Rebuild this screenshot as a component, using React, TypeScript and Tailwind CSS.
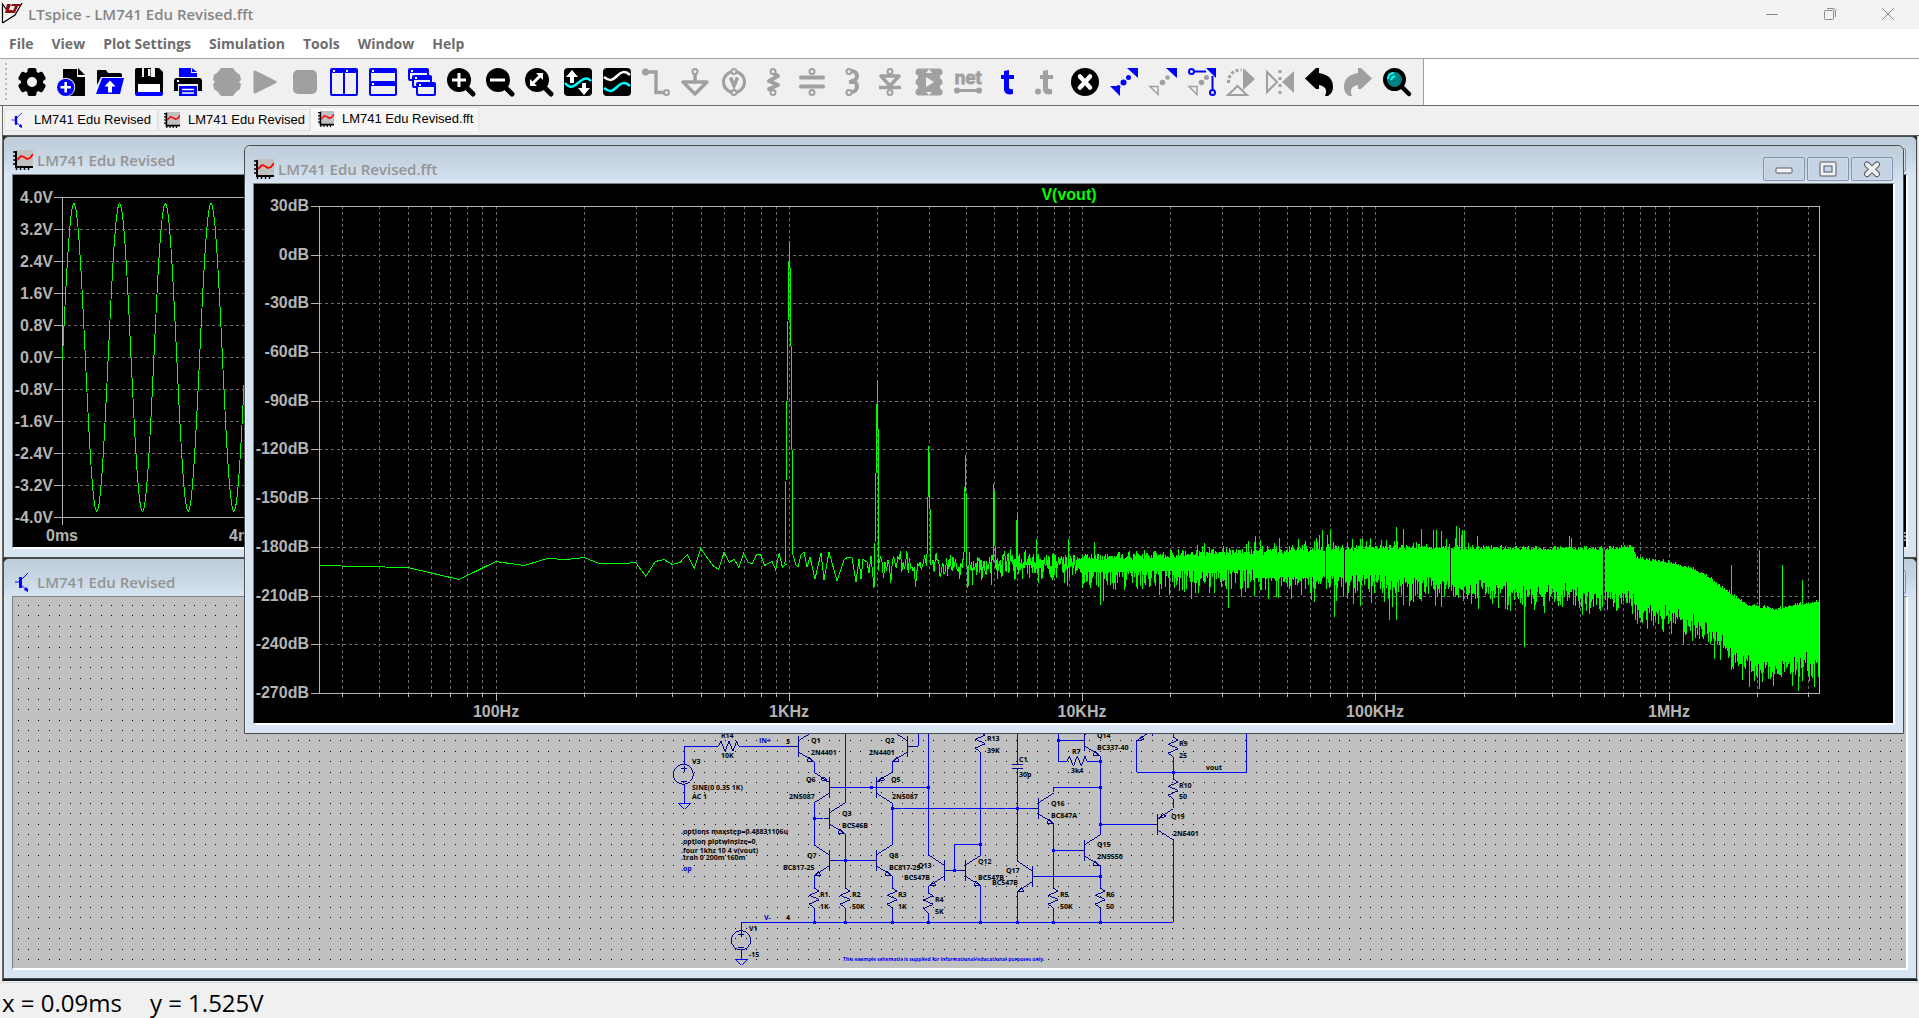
import type { ReactNode } from "react";

const GRAY = "#a0a0a0";
const BLUE = "#0000ff";
const BG = "#f0f0f0";

/* ---------- toolbar icons, all on a 28x28 grid ---------- */

const gearTeeth = (w: number) => [0, 60, 120].map((a) => (
	<rect key={a} x={14 - w / 2} y="0" width={w} height="28" rx="2" transform={`rotate(${a} 14 14)`} />
));

const pane = (x: number, y: number, w: number, h: number) => (
	<g key={`${x}-${y}`}>
		<rect x={x + 1} y={y + 1} width={w - 2} height={h - 2} rx="1" fill={BG} stroke={BLUE} strokeWidth="2" />
		<path d={`M${x + 1} ${y + 3}h${w - 2}`} stroke={BLUE} strokeWidth="4" />
		<path d={`M${x + 3} ${y + 3}h2`} stroke="#fff" strokeWidth="2" />
	</g>
);

const lens = (
	<>
		<circle cx="12" cy="12" r="12" />
		<path d="M19 19l7 7" stroke="#000" strokeWidth="5" strokeLinecap="round" />
	</>
);

const ring = (cx: number, cy: number, color = GRAY) => (
	<circle cx={cx} cy={cy} r="2.5" fill={BG} stroke={color} strokeWidth="2" />
);

const tGlyph = "M11 3l5-1v5h5v4h-5v8q0 3 4 2v5q-9 2-9-5V11H8V7h3z";

type Tool = { name: string; off?: boolean; icon: ReactNode };

const tools: Tool[] = [
	{
		name: "Settings",
		icon: (
			<>
				<circle cx="14" cy="14" r="11" />
				{gearTeeth(9)}
				<circle cx="14" cy="14" r="5" fill={BG} />
			</>
		),
	},
	{
		name: "New Schematic",
		icon: (
			<>
				<path d="M6 1h14v8h8v19H6z" />
				<path d="M21 0l7 7h-7z" />
				<circle cx="8.7" cy="19.3" r="9.5" fill={BG} />
				<circle cx="8.7" cy="19.3" r="8.6" fill={BLUE} />
				<path d="M3.5 19.3h10.4M8.7 14v10.6" stroke="#fff" strokeWidth="2.6" />
			</>
		),
	},
	{
		name: "Open",
		icon: (
			<>
				<path d="M1 3q0-1 1-1h8l2 3h12q2 0 2 2v2H5L1 17z" />
				<path d="M6 10h22l-4 16H0z" fill={BLUE} />
				<path d="M14 12.5l5.5 6H16v6h-4v-6H8.500z" fill="#fff" />
			</>
		),
	},
	{
		name: "Save",
		icon: (
			<>
				<path d="M2 0h22l4 4v20H0V2q0-2 2-2z" />
				<path d="M7 0h13v9H7z" fill={BG} />
				<path d="M9 0h7v9H9z" />
				<path d="M13 1h2.500v7H13z" fill={BG} />
				<path d="M3 16h22v8H3z" fill="#fff" />
				<path d="M0 24h28v2q0 2-2 2H2q-2 0-2-2z" fill={BLUE} />
			</>
		),
	},
	{
		name: "Print",
		icon: (
			<>
				<path d="M5 0h12v5h6v4H5z" fill={BLUE} />
				<path d="M18 0l5 4h-5z" fill={BLUE} />
				<path d="M3 10h22q3 0 3 3v10H0V13q0-3 3-3z" />
				<path d="M3 13h2" stroke="#fff" strokeWidth="2" />
				<path d="M4 16h20v12H4z" fill={BG} />
				<path d="M5 18h18v10H5z" fill={BLUE} />
				<path d="M8 21.500h12M8 25h12" stroke="#fff" strokeWidth="1.500" />
			</>
		),
	},
	{
		name: "Configure Analysis",
		off: true,
		icon: <path d="M8 0h12l3 4 4 3 1 5-2 2 2 2-1 5-4 3-3 4H8l-3-4-4-3-1-5 2-2-2-2 1-5 4-3z" fill={GRAY} />,
	},
	{ name: "Run", off: true, icon: <path d="M3 4l20 10L3 24z" fill={GRAY} stroke={GRAY} strokeWidth="3" strokeLinejoin="round" /> },
	{ name: "Stop", off: true, icon: <rect x="2" y="2" width="24" height="24" rx="5" fill={GRAY} /> },
	{ name: "Tile Vertically", icon: <>{[pane(0, 0, 15, 28), pane(13, 0, 15, 28)]}</> },
	{ name: "Tile Horizontally", icon: <>{[pane(0, 0, 28, 15), pane(0, 13, 28, 15)]}</> },
	{ name: "Cascade", icon: <>{[pane(0, 0, 21, 13), pane(4, 7, 20, 13), pane(8, 14, 20, 14)]}</> },
	{
		name: "Zoom In",
		icon: (
			<>
				{lens}
				<path d="M5 12h14M12 5v14" stroke="#fff" strokeWidth="3" />
			</>
		),
	},
	{
		name: "Zoom Out",
		icon: (
			<>
				{lens}
				<path d="M4 12h15" stroke="#fff" strokeWidth="3" />
			</>
		),
	},
	{
		name: "Zoom to Fit",
		icon: (
			<>
				{lens}
				<path d="M11 5h7v7zM5 11v7h7z" fill="#fff" />
				<path d="M8 15l7-7" stroke="#fff" strokeWidth="3" />
			</>
		),
	},
	{
		name: "Autorange",
		icon: (
			<>
				<rect width="28" height="28" rx="4" />
				<path d="M1 15c5 6 8 4 13 0s9-7 13-2" fill="none" stroke="#00ffff" strokeWidth="2.500" />
				<path d="M8 2l6 7h-4v6H6V9H2zM20 27l-6-7h4v-5h4v5h4z" fill="#fff" />
			</>
		),
	},
	{
		name: "Plot",
		icon: (
			<>
				<rect width="28" height="28" rx="4" />
				<path d="M1 9c6 5 9 3 13-1s8-6 13-1" fill="none" stroke="#fff" strokeWidth="2.500" />
				<path d="M1 20c6 5 9 3 13-1s8-6 13-1" fill="none" stroke="#00ffff" strokeWidth="2.500" />
			</>
		),
	},
	{
		name: "Wire",
		off: true,
		icon: (
			<>
				<circle cx="3.500" cy="4" r="3.500" fill={GRAY} />
				<path d="M4 4h10v20.500h9" fill="none" stroke={GRAY} strokeWidth="3.500" />
				{ring(24.5, 24.5)}
			</>
		),
	},
	{
		name: "Ground",
		off: true,
		icon: (
			<>
				<path d="M14 6v8M2 14h24L14 26z" fill="none" stroke={GRAY} strokeWidth="3.500" strokeLinejoin="round" />
				{ring(14, 3.5)}
			</>
		),
	},
	{
		name: "Voltage Source",
		off: true,
		icon: (
			<>
				<circle cx="14" cy="14" r="10.500" fill="none" stroke={GRAY} strokeWidth="3" />
				<path d="M10.500 9.500L14 18l3.500-8.500" fill="none" stroke={GRAY} strokeWidth="3.500" />
				{ring(14, 3.5)}
				{ring(14, 24.5)}
			</>
		),
	},
	{
		name: "Resistor",
		off: true,
		icon: (
			<>
				<path d="M14 5l5 3-9 5 9 4-9 4 5 3" fill="none" stroke={GRAY} strokeWidth="4" strokeLinejoin="round" />
				{ring(14, 3.5)}
				{ring(14, 24.5)}
			</>
		),
	},
	{
		name: "Capacitor",
		off: true,
		icon: (
			<>
				<path d="M3 9.500h22M3 18.500h22" stroke={GRAY} strokeWidth="4" strokeLinecap="round" />
				{ring(14, 3.5)}
				{ring(14, 24.5)}
			</>
		),
	},
	{
		name: "Inductor",
		off: true,
		icon: (
			<>
				<path d="M14 3c8 0 8 10 0 10 8 0 8 11 0 11" fill="none" stroke={GRAY} strokeWidth="4" />
				<path d="M12 14h6" stroke={GRAY} strokeWidth="4" />
				{ring(12, 3.5)}
				{ring(12, 24.5)}
			</>
		),
	},
	{
		name: "Diode",
		off: true,
		icon: (
			<>
				<path d="M5 8h18l-9 10z" fill="none" stroke={GRAY} strokeWidth="3.500" strokeLinejoin="round" />
				<path d="M3 19.500h22" stroke={GRAY} strokeWidth="3.500" />
				{ring(14, 3.5)}
				{ring(14, 24.5)}
			</>
		),
	},
	{
		name: "Component",
		off: true,
		icon: (
			<>
				<path d="M3 3h22v22H3z" fill={GRAY} />
				<path d="M4 4h20M4 14h20M4 24h20" stroke={GRAY} strokeWidth="7" strokeLinecap="round" />
				<path d="M11 9l8 5-8 5zM14 1l3 4h-6zM14 27l3-3h-6z" fill={BG} />
			</>
		),
	},
	{
		name: "Net Name",
		off: true,
		icon: (
			<>
				<text
					x="14"
					y="16"
					textAnchor="middle"
					className="font-['Liberation_Sans',sans-serif] text-[18px] font-bold"
					fill={GRAY}
					stroke={GRAY}
				>
					net
				</text>
				<path d="M4 22.500h20" stroke={GRAY} strokeWidth="3" />
				<circle cx="3" cy="22.500" r="3" fill={GRAY} />
				<circle cx="25" cy="22.500" r="3" fill={GRAY} />
			</>
		),
	},
	{
		name: "Text",
		icon: <path d={tGlyph} fill={BLUE} />,
	},
	{
		name: "SPICE Directive",
		off: true,
		icon: (
			<>
				<path d={tGlyph} fill={GRAY} />
				<circle cx="6" cy="23.500" r="3" fill={GRAY} />
			</>
		),
	},
	{
		name: "Delete",
		icon: (
			<>
				<circle cx="14" cy="14" r="14" />
				<path d="M9 8.500l10 11M19 8.500l-10 11" stroke="#fff" strokeWidth="4.500" strokeLinecap="round" />
			</>
		),
	},
	{
		name: "Move",
		icon: (
			<g fill={BLUE}>
				<path d="M17 0h11v10zM0 18h10v10z" />
				<circle cx="13.500" cy="14.500" r="3" />
				<circle cx="18.500" cy="9.500" r="2.500" />
				<circle cx="8.500" cy="19" r="2" />
			</g>
		),
	},
	{
		name: "Duplicate",
		off: true,
		icon: (
			<>
				<path d="M17 0h11v10z" fill={BLUE} />
				<path d="M1 18.500h8v8z" fill="none" stroke={GRAY} strokeWidth="1.500" />
				<g fill={GRAY}>
					<circle cx="13.500" cy="14.500" r="2.800" />
					<circle cx="18.500" cy="9.500" r="2.300" />
				</g>
			</>
		),
	},
	{
		name: "Drag",
		icon: (
			<>
				<path d="M18 0h10v10z" fill={BLUE} />
				<path d="M1 18.500h8v8z" fill="none" stroke={GRAY} strokeWidth="1.500" />
				<circle cx="13.500" cy="14.500" r="2.800" fill={GRAY} />
				<circle cx="18.500" cy="9.500" r="2.500" fill={GRAY} />
				<path d="M4 3.500h14M24.500 8v16" stroke={BLUE} strokeWidth="2" />
				{ring(3.5, 3.5, BLUE)}
				{ring(24.5, 24.5, BLUE)}
			</>
		),
	},
	{
		name: "Rotate",
		off: true,
		icon: (
			<>
				<path d="M16 0l12 11-12 11z" fill={GRAY} />
				<path d="M1.500 15c0-8 4-13 13-13" fill="none" stroke={GRAY} strokeWidth="3" strokeDasharray="3 2" />
				<path d="M1 27l9.500-9 9.500 9z" fill={BG} stroke={GRAY} strokeWidth="2" />
			</>
		),
	},
	{
		name: "Mirror",
		off: true,
		icon: (
			<>
				<path d="M1 4l10 10L1 24z" fill="none" stroke={GRAY} strokeWidth="2" />
				<path d="M28 3v22L16 14z" fill={GRAY} />
				<path d="M14 2v25" stroke={GRAY} strokeWidth="3" strokeDasharray="3 4" />
			</>
		),
	},
	{ name: "Undo", icon: <path d="M0 10.500L11 0h3v5q14 2 14 14 0 6-5 9h-3q4-9-6-11v4h-3z" /> },
	{ name: "Redo", off: true, icon: <path d="M28 10.500L17 0h-3v5Q0 7 0 19q0 6 5 9h3q-4-9 6-11v4h3z" fill={GRAY} /> },
	{
		name: "Search",
		icon: (
			<>
				<circle cx="11.500" cy="11.500" r="9.500" fill="#008080" stroke="#000" strokeWidth="4" />
				<path d="M5 11q0-6 6-6M8 12q1-3 4-4" fill="none" stroke="#00ffff" strokeWidth="2" />
				<path d="M20 20l6 6" stroke="#000" strokeWidth="4.500" strokeLinecap="round" />
			</>
		),
	},
];

/* ---------- small document icons ---------- */

function PlotIcon({ className }: { className: string }) {
	return (
		<svg viewBox="0 0 20 20" className={className} aria-hidden="true">
			<path d="M3 0h17v17H3z" fill="#c0c0c0" />
			<path d="M3 1v17M2 17h18" stroke="#000" strokeWidth="2" />
			<path d="M0 2h3M0 6h3M0 10h3M0 14h3M3.500 17v3M7.500 17v3M11.500 17v3M15.500 17v3" stroke="#000" strokeWidth="1.500" />
			<path d="M4 10l4-4 3 1 3 2 3-1 3-4" fill="none" stroke="#f00" strokeWidth="1.800" />
		</svg>
	);
}

function SchematicIcon({ className }: { className: string }) {
	return (
		<svg viewBox="0 0 20 20" className={className} aria-hidden="true">
			<path d="M2 10h5" stroke={BLUE} />
			<path d="M7.500 5v11" stroke={BLUE} strokeWidth="3" />
			<path d="M8 8l7-7M8 13l7 6" stroke={BLUE} />
			<path d="M15 20v-3l-2-2-2 3z" fill={BLUE} />
		</svg>
	);
}

/* ---------- signal data ---------- */

function mulberry32(seed: number) {
	let a = seed;
	return () => {
		a = (a + 0x6d2b79f5) | 0;
		let t = Math.imul(a ^ (a >>> 15), 1 | a);
		t = (t + Math.imul(t ^ (t >>> 7), 61 | t)) ^ t;
		return ((t ^ (t >>> 14)) >>> 0) / 4294967296;
	};
}

// fft plot area inside its client rectangle
const L = 65;
const R = 1565;
const T = 22;
const B = 509;
const DECADE = 293.2;
const X1K = 535;
const PX_PER_DB = 1.623;

const fx = (hz: number) => X1K + DECADE * Math.log10(hz / 1000);

// y positions of the first bins (25 Hz apart, starting at 25 Hz)
const lowBins = [
	381, 383, 395, 377, 381, 374, 375, 373, 379, 379, 379, 378, 392, 377, 375, 380, 378, 370, 384, 364, 373, 381,
	385, 368, 378, 375, 383, 369, 378, 379, 370, 370, 381, 379, 377, 385, 369, 383, 380,
];

// 1 kHz peak and the ripple up to 2 kHz
const firstPeak: [number, number][] = [
	[531, 380], [531.5, 338], [532.5, 258], [533.5, 178], [534.5, 98], [535.5, 57], [536.5, 109], [537.5, 213],
	[538.5, 317], [539, 371], [542, 381], [544, 383], [547, 371], [550, 368], [553, 383], [556, 373], [561, 395],
	[567, 369], [570, 396], [575, 368], [583, 397], [590, 376], [594, 373], [598, 374], [602, 398], [605, 375],
	[607, 395], [609, 375], [613, 378], [615, 389], [617, 372], [620, 404], [621.5, 337], [622.5, 244],
	[623.5, 197], [624.5, 292], [624.5, 387],
];

const floor: [number, number][] = [
	[535, 379], [828, 378], [1000, 376], [1121, 373], [1195, 374], [1346, 377], [1378, 375], [1382, 386],
	[1414, 391], [1436, 396], [1451, 404], [1474, 421], [1491, 433], [1521, 439], [1546, 434], [1565, 432],
];

const noiseFloor = (x: number) => {
	for (let i = 1; i < floor.length; i++) {
		const [x0, y0] = floor[i - 1];
		const [x1, y1] = floor[i];
		if (x <= x1) return y0 + ((y1 - y0) * (x - x0)) / (x1 - x0);
	}
	return 432;
};

// bin number -> peak height, harmonics of 1 kHz and their side bins
const harmonics: Record<number, number> = {
	119: 325, 120: 262, 121: 319, 159: 323, 160: 271, 161: 329,
	200: 300, 201: 342, 239: 352, 240: 329, 280: 355, 360: 355,
};

const tallSpikes: Record<number, number> = {
	840: 358, 1477: 381, 1505: 366, 1528: 381, 1548: 396, 1205: 344, 1202: 342, 1208: 346, 1315: 352, 1317: 354,
};
const deepSpikes: Record<number, number> = {
	846: 421, 849: 417, 974: 424, 1080: 433, 1135: 436, 1142: 436, 1270: 463, 1495: 503, 1544: 507,
};
const gaps = [1071, 1090, 1196, 1349, 1350];

const rnd = mulberry32(741);

const toY = (base: number, power: number) => Math.round(base - PX_PER_DB * 10 * Math.log10(power));

const buildSpectrum = () => {
	const low = lowBins.map((y, i) => `L${fx(25 * (i + 1)).toFixed(1)} ${y + 0.5}`).join("");
	const peak = firstPeak.map(([x, y]) => `L${x} ${y}`).join("");
	let d = `M${low.slice(1)}${peak}`;
	for (let k = 81; k < 420; k++) {
		const y = harmonics[k] ?? Math.min(toY(noiseFloor(fx(25 * k)), 0.02 - Math.log(rnd() + 1e-6)), 412);
		d += `L${fx(25 * k).toFixed(1)} ${y}`;
	}
	return d;
};

const buildBand = () => {
	let d = "";
	for (let x = 828; x < R; x++) {
		if (gaps.includes(x)) continue;
		const hz = 1000 * Math.pow(10, (x - X1K) / DECADE);
		// bins per pixel column, plus the ones the line reaches from its neighbours
		const n = 2 + (hz * 0.00785) / 25;
		const base = noiseFloor(x);
		const max = -Math.log(1 - Math.pow(0.1 + 0.85 * rnd(), 1 / n));
		const min = (0.03 - Math.log(rnd() + 0.0001)) / n;
		let top = toY(base, max);
		let bottom = Math.max(toY(base, min), base + (x < 1000 ? 10 : 18));
		if (x > 940 && x < 1225 && rnd() < 0.3) top -= Math.round(rnd() * (x > 1060 ? 19 : 14));
		top = tallSpikes[x] ?? top;
		bottom = deepSpikes[x] ?? Math.min(bottom, base + 72);
		d += `M${x + 0.5} ${top}V${Math.max(Math.round(bottom), top + 3)}`;
	}
	return d;
};

const spectrum = buildSpectrum();
const band = buildBand();

const dbLabels = [30, 0, -30, -60, -90, -120, -150, -180, -210, -240, -270];
const decades: [number, string][] = [[100, "100Hz"], [1e3, "1KHz"], [1e4, "10KHz"], [1e5, "100KHz"], [1e6, "1MHz"]];

const minorTicks: number[] = [];
for (let p = 10; p <= 1e6; p *= 10) {
	for (let m = 1; m < 10; m++) {
		if (p * m > 25 && p * m < 3.2e6) minorTicks.push(p * m);
	}
}

function FftPlot() {
	return (
		<svg
			className="block h-full w-full bg-black font-['Liberation_Sans',sans-serif] text-[16px] font-bold"
			shapeRendering="crispEdges"
			role="img"
			aria-label="FFT of V(vout)"
		>
			<g stroke="#6c6c6c" strokeDasharray="3 3">
				{minorTicks.map((hz) => (
					<path key={hz} d={`M${Math.round(fx(hz)) + 0.5} ${T}V${B}`} />
				))}
				{dbLabels.slice(1, -1).map((db) => (
					<path key={db} d={`M${L} ${Math.round(T + (30 - db) * PX_PER_DB) + 0.5}H${R}`} />
				))}
			</g>
			<g stroke="#b4b4b4" fill="none">
				<path d={`M${L + 0.5} ${T + 0.5}H${R + 0.5}V${B + 0.5}H${L + 0.5}z`} />
				{dbLabels.map((db) => (
					<path key={db} d={`M${L - 8} ${Math.round(T + (30 - db) * PX_PER_DB) + 0.5}h8`} />
				))}
				{minorTicks.map((hz) => (
					<path key={hz} d={`M${Math.round(fx(hz)) + 0.5} ${B}v${Number.isInteger(Math.log10(hz)) ? 8 : 4}`} />
				))}
			</g>
			<g fill="#b4b4b4">
				{dbLabels.map((db) => (
					<text key={db} x={L - 10} y={Math.round(T + (30 - db) * PX_PER_DB) + 5} textAnchor="end">{db}dB</text>
				))}
				{decades.map(([hz, label]) => (
					<text key={hz} x={Math.round(fx(hz))} y="533" textAnchor="middle">{label}</text>
				))}
			</g>
			<text x={(L + R) / 2} y="16" textAnchor="middle" fill="#00ff00">V(vout)</text>
			<path d={spectrum} fill="none" stroke="#00ff00" />
			<path d={band} fill="none" stroke="#00ff00" />
		</svg>
	);
}

const volts = ["4.0V", "3.2V", "2.4V", "1.6V", "0.8V", "0.0V", "-0.8V", "-1.6V", "-2.4V", "-3.2V", "-4.0V"];

let sine = "M49.5 185";
for (let i = 0; i <= 1830; i++) {
	sine += `L${49.5 + i} ${(182.5 - 154 * Math.sin((2 * Math.PI * i) / 45.7)).toFixed(1)}`;
}

function TransientPlot() {
	return (
		<svg
			className="block h-full w-full bg-black font-['Liberation_Sans',sans-serif] text-[16px] font-bold"
			shapeRendering="crispEdges"
			role="img"
			aria-label="Transient waveform"
		>
			<g stroke="#6c6c6c" strokeDasharray="3 3">
				{volts.slice(1, -1).map((v, i) => (
					<path key={v} d={`M49 ${54.5 + 32 * i}H1880`} />
				))}
			</g>
			<g stroke="#b4b4b4">
				<path d="M49.5 22V350M49 22.500H1880M49 342.500H1880" />
				{volts.map((v, i) => (
					<path key={v} d={`M41 ${22.5 + 32 * i}h8`} />
				))}
			</g>
			<g fill="#b4b4b4">
				{volts.map((v, i) => (
					<text key={v} x="40" y={28 + 32 * i} textAnchor="end">{v}</text>
				))}
				<text x="49" y="366" textAnchor="middle">0ms</text>
				<text x="232" y="366" textAnchor="middle">4ms</text>
				<text x="1876" y="366" textAnchor="middle">40ms</text>
			</g>
			<path d={sine} fill="none" stroke="#00ff00" />
		</svg>
	);
}

/* ---------- schematic, drawn in units of a third of a pixel ---------- */

const OX = 647;
const OY = 113;

const transistors: [number, number, number, "npn" | "pnp"][] = [
	[415, 109, 1, "npn"], [743, 109, -1, "npn"], [508, 233, -1, "pnp"], [649, 233, 1, "pnp"],
	[508, 325, 1, "npn"], [508, 451, -1, "npn"], [649, 451, 1, "npn"], [853, 482, -1, "npn"],
	[916, 482, 1, "npn"], [1117, 499, -1, "npn"], [1135, 295, 1, "npn"], [1273, 421, 1, "npn"],
	[1273, 91, 1, "npn"], [1492, 343, 1, "pnp"], [1478, 45, -1, "npn"],
];

const resistors: [number, number][] = [
	[463, 535], [556, 535], [697, 535], [805, 549], [961, 67], [1180, 535], [1321, 535], [1540, 82], [1540, 208],
];

const wires =
	"M73 163V109H175M236 109H385M73 223V280M520 233H805M805 40V437M775 40V109M556 40V280M463 155V187M697 155V187" +
	"M463 280V405M463 325H490M697 280V405M697 295H1118M525 451H632M556 373V535M463 497V535M463 603V637M556 603V637" +
	"M697 497V535M697 603V637M805 527V549M805 617V637M244 660V637H1540V388M244 720V748M870 482H900M883 482V403H961" +
	"M961 135V437M961 527V637M1072 40V165M1072 177V453M1072 545V637M1180 247V232H1321M1180 343V535M1180 421H1256" +
	"M1180 603V637M1321 138V373M1321 343H1475M1321 467V535M1321 499H1134M1321 603V637M1195 40V154H1220M1281 154H1321" +
	"M1195 91H1256M1540 40V82M1540 150V208M1430 91V187H1760V40M1540 276V295";

const joints: [number, number][] = [
	[634, 233], [805, 233], [463, 325], [697, 295], [556, 451], [883, 482], [961, 403], [1072, 295], [1321, 154],
	[1321, 232], [1321, 343], [1180, 421], [1321, 499], [1195, 91], [1540, 187], [463, 637], [556, 637],
	[697, 637], [805, 637], [961, 637], [1072, 637], [1180, 637], [1321, 637],
];

const labels: [number, number, string][] = [
	[182, 84, "R14"], [183, 144, "10K"], [378, 102, "3"], [454, 99, "Q1"], [454, 135, "2N4401"], [674, 99, "Q2"],
	[628, 135, "2N4401"], [96, 162, "V3"], [96, 240, "SINE(0 0.35 1K)"], [96, 267, "AC 1"], [438, 216, "Q6"],
	[388, 267, "2N5087"], [693, 216, "Q5"], [697, 267, "2N5087"], [546, 318, "Q3"], [546, 354, "BC546B"],
	[64, 373, ".options maxstep=0.48831106u"], [64, 402, ".option plotwinsize=0"],
	[64, 429, ".four 1khz 10 4 v(vout)"], [64, 450, ".tran 0 200m 160m"], [441, 444, "Q7"], [370, 480, "BC817-25"],
	[687, 444, "Q8"], [687, 480, "BC817-25"], [775, 474, "Q13"], [732, 510, "BC547B"], [480, 561, "R1"],
	[480, 597, "1K"], [576, 561, "R2"], [576, 597, "50K"], [714, 561, "R3"], [714, 597, "1K"], [825, 576, "R4"],
	[825, 612, "5K"], [378, 630, "4"], [267, 663, "V1"], [267, 741, "-15"], [981, 93, "R13"], [981, 129, "39K"],
	[1077, 156, "C1"], [1077, 201, "30p"], [1236, 132, "R7"], [1233, 189, "3k4"], [1311, 84, "Q14"],
	[1311, 120, "BC337-40"], [1173, 288, "Q16"], [1173, 324, "BC847A"], [954, 462, "Q12"], [954, 510, "BC547B"],
	[1038, 489, "Q17"], [996, 525, "BC547B"], [1200, 561, "R5"], [1200, 597, "50K"], [1311, 411, "Q15"],
	[1311, 447, "2N5550"], [1338, 561, "R6"], [1338, 597, "50"], [1558, 108, "R9"], [1558, 144, "25"],
	[1638, 180, "vout"], [1558, 234, "R10"], [1558, 267, "50"], [1533, 327, "Q19"], [1539, 378, "2N5401"],
];

const blueLabels: [number, number, string][] = [[297, 99, "IN+"], [312, 630, "V-"], [64, 483, ".op"]];

let dots = "";
for (let j = 0; j < 36; j++) {
	for (let i = 0; i < 183; i++) {
		dots += `M${Math.floor(5 + 10.405 * i)} ${Math.floor(8.5 + 10.41 * j)}.500h1`;
	}
}

const Transistor = ({ x, y, dir, kind }: { x: number; y: number; dir: number; kind: "npn" | "pnp" }) => {
	const ex = x + 46 * dir;
	const lead = x - 17 * dir;
	const arrow =
		kind === "npn"
			? `M${ex} ${y + 46}l${-20 * dir} -2l${6 * dir} -12z`
			: `M${x + 4 * dir} ${y - 18}l${12 * dir} -14l${10 * dir} 8z`;
	return <path d={`M${lead} ${y}H${x}M${x} ${y - 32}V${y + 32}M${x} ${y - 16}L${ex} ${y - 46}M${x} ${y + 16}L${ex} ${y + 46}${arrow}`} />;
};

function Schematic() {
	return (
		<svg
			className="block h-full w-full bg-[#c0c0c0] font-['Open_Sans',sans-serif] text-[7px] font-bold"
			role="img"
			aria-label="LM741 schematic"
		>
			<path d={dots} stroke="#000" shapeRendering="crispEdges" />
			<g transform={`translate(${OX} ${OY}) scale(0.33333)`} fill="none" strokeWidth="3" shapeRendering="crispEdges">
				<g stroke="#000090">
					{transistors.map(([x, y, dir, kind]) => (
						<Transistor key={`${x}-${y}`} x={x} y={y} dir={dir} kind={kind} />
					))}
					{resistors.map(([x, y]) => (
						<path key={`${x}-${y}`} d={`M${x} ${y}l15 8l-30 13l30 13l-30 13l15 13v8`} />
					))}
					<path d="M175 109l8 -16l12 31l12 -31l12 31l11 -31l6 16M1220 154l8 -16l12 31l12 -31l12 31l11 -31l6 16" />
					<circle cx="70" cy="193" r="30" />
					<circle cx="243" cy="691" r="29" />
					<path d="M64 177h18M73 168v18M64 216h18M235 673h18M244 664v18M235 714h18M385 109h30M743 109h32M1056 165h32M1056 177h32" />
				</g>
				<path d={wires} stroke={BLUE} />
				<path d="M55 280h36l-18 18zM226 748h36l-18 18z" stroke={BLUE} />
				{joints.map(([x, y]) => (
					<rect key={`${x}-${y}`} x={x - 4} y={y - 4} width="9" height="9" fill={BLUE} />
				))}
			</g>
			{labels.map(([x, y, t]) => (
				<text key={`${x}-${y}`} x={Math.round(OX + x / 3)} y={Math.round(OY + y / 3)}>{t}</text>
			))}
			{blueLabels.map(([x, y, t]) => (
				<text key={t} x={Math.round(OX + x / 3)} y={Math.round(OY + y / 3)} fill="#0000c8">{t}</text>
			))}
			<text x={OX + 183} y={OY + 251} className="text-[5px]" fill={BLUE}>
				This example schematic is supplied for informational/educational purposes only.
			</text>
		</svg>
	);
}

/* ---------- windows ---------- */

function CaptionButtons() {
	const box = "flex h-6 w-[42px] items-center justify-center rounded-[2px] border border-[#8390b0] bg-[#c6d3e2] shadow-[inset_0_0_0_1px_#d3deea]";
	return (
		<div className="flex gap-[2px]">
			<button className={box} aria-label="Minimize">
				<svg width="18" height="18">
					<rect x="1" y="8" width="16" height="5" rx="1" fill="#f4f4f4" stroke="#55586a" />
				</svg>
			</button>
			<button className={box} aria-label="Maximize">
				<svg width="18" height="18">
					<rect x="1" y="2" width="16" height="14" rx="1" fill="#f0f0f0" stroke="#55586a" />
					<rect x="5" y="6" width="8" height="6" fill="#c6d3e2" stroke="#55586a" />
				</svg>
			</button>
			<button className={box} aria-label="Close">
				<svg width="18" height="18">
					<path d="M4 4.500l10 9.500M14 4.500l-10 9.500" stroke="#55586a" strokeWidth="6" strokeLinecap="round" />
					<path d="M4 4.500l10 9.500M14 4.500l-10 9.500" stroke="#f4f4f4" strokeWidth="4" strokeLinecap="round" />
				</svg>
			</button>
		</div>
	);
}

function ChildWindow({ title, icon, place, children }: { title: string; icon: ReactNode; place: string; children: ReactNode }) {
	return (
		<section
			className={`absolute flex flex-col rounded-t-md border border-[#4b4b4b] bg-[#d7e4f2] px-2 pb-2 shadow-[inset_1px_1px_0_#e8f0f8] ${place}`}
		>
			<div className="-mx-2 flex h-[37px] shrink-0 items-center rounded-t-md bg-linear-to-b from-[#bfcddb] via-[#c8d5e2] to-[#d7e4f2] pt-2 pr-[10px] pl-[9px]">
				{icon}
				<h2 className="ml-1 flex-1 text-[15px] leading-5 font-semibold text-[#949494]">{title}</h2>
				<CaptionButtons />
			</div>
			<div className="min-h-0 flex-1 overflow-hidden border-t border-r-2 border-b-2 border-l border-t-[#808080] border-r-white border-b-white border-l-[#808080]">
				{children}
			</div>
		</section>
	);
}

const menus = ["File", "View", "Plot Settings", "Simulation", "Tools", "Window", "Help"];

export default function App() {
	return (
		<div className="flex h-screen flex-col overflow-hidden bg-[#f0f0f0] font-['Open_Sans','Noto_Sans',sans-serif]">
			<header className="flex h-[29px] shrink-0 items-start bg-[#f3f3f3] pr-[2px]">
				<svg width="22" height="28" viewBox="0 0 22 28" className="ml-px" aria-hidden="true">
					<path d="M1.500 23V4l5 7M1.500 23L14 15l7-12" fill="none" stroke="#000" strokeWidth="1.200" />
					<path d="M6 4h4L8 10h4l-1 3H4zM11 4h10l-1 2h-3l-3 7h-3l3-7h-4z" fill="#8a0f14" />
				</svg>
				<h1 className="ml-[5px] flex-1 text-[15px] leading-7 font-semibold text-[#868686]">LTspice - LM741 Edu Revised.fft</h1>
				<div className="flex text-[#8a8a8a]">
					<button className="flex h-7 w-[58px] items-center justify-center" aria-label="Minimize">
						<svg width="12" height="12" stroke="currentColor"><path d="M0 6.500h12" /></svg>
					</button>
					<button className="flex h-7 w-[58px] items-center justify-center" aria-label="Restore">
						<svg width="12" height="12" stroke="currentColor" fill="none">
							<rect x="0.500" y="2.500" width="9" height="9" rx="1" />
							<path d="M3 .5h6q2.500 0 2.500 2.500v6" />
						</svg>
					</button>
					<button className="flex h-7 w-[58px] items-center justify-center" aria-label="Close">
						<svg width="12" height="12" stroke="currentColor"><path d="M0 0l12 12M12 0L0 12" /></svg>
					</button>
				</div>
			</header>

			<nav className="flex h-[29px] shrink-0 items-center gap-[18px] bg-white pl-[9px] text-[14px] font-bold text-[#6d6d6d]">
				{menus.map((m) => (
					<button key={m}>{m}</button>
				))}
			</nav>

			<div className="flex h-12 shrink-0 border-t border-b border-t-[#a0a0a0] border-b-[#6a6a6a] bg-white">
				<div className="flex items-center gap-[11px] border-r border-[#a0a0a0] bg-[#f0f0f0] pr-3">
					<div className="ml-[5px] h-[38px] w-[2px] bg-[repeating-linear-gradient(#b8b8b8_0_2px,transparent_2px_5px)]" />
					<div className="flex gap-[11px]">
						{tools.map((t) => (
							<button key={t.name} className="size-7" aria-label={t.name} disabled={t.off}>
								<svg viewBox="0 0 28 28" className="size-7 overflow-visible">{t.icon}</svg>
							</button>
						))}
					</div>
				</div>
			</div>

			<div className="ml-[2px] flex h-[30px] shrink-0 items-start border-b border-l border-b-[#5a5a5a] border-l-[#6a6a6a] pl-px font-['Liberation_Sans',sans-serif] text-[13px] whitespace-nowrap text-black">
				<button className="mt-[3px] flex h-[22px] w-[154px] items-center gap-2 border border-[#e2e2e2] bg-[#f3f3f3] pl-[5px]">
					<SchematicIcon className="size-4" />
					LM741 Edu Revised
				</button>
				<button className="mt-[3px] flex h-[22px] w-[152px] items-center gap-2 border border-[#e2e2e2] bg-[#f3f3f3] pl-[5px]">
					<PlotIcon className="size-4" />
					LM741 Edu Revised
				</button>
				<button className="mt-px flex h-6 w-[169px] items-center gap-2 border border-b-0 border-[#e2e2e2] bg-[#f9f9f9] pb-[2px] pl-[7px]">
					<PlotIcon className="size-4" />
					LM741 Edu Revised.fft
				</button>
			</div>

			<main className="relative mr-px ml-[2px] min-h-0 flex-1 border-r border-b-2 border-l border-r-[#d0d0d0] border-b-[#10202a] border-l-[#6a6a6a] bg-[#20302f]">
				<ChildWindow title="LM741 Edu Revised" icon={<PlotIcon className="size-5" />} place="top-0 left-0 right-0 h-[422px]">
					<TransientPlot />
				</ChildWindow>
				<ChildWindow title="LM741 Edu Revised" icon={<SchematicIcon className="size-5" />} place="top-[422px] right-0 bottom-0 left-0">
					<Schematic />
				</ChildWindow>
				<ChildWindow title="LM741 Edu Revised.fft" icon={<PlotIcon className="size-5" />} place="top-[9px] right-[13px] left-[241px] h-[589px]">
					<FftPlot />
				</ChildWindow>
			</main>

			<footer className="mt-px flex h-9 shrink-0 items-center gap-7 border-t border-[#d8d8d8] pt-1 pl-[2px] text-[24px] leading-7 text-black">
				<span>x = 0.09ms</span>
				<span>y = 1.525V</span>
			</footer>
		</div>
	);
}
